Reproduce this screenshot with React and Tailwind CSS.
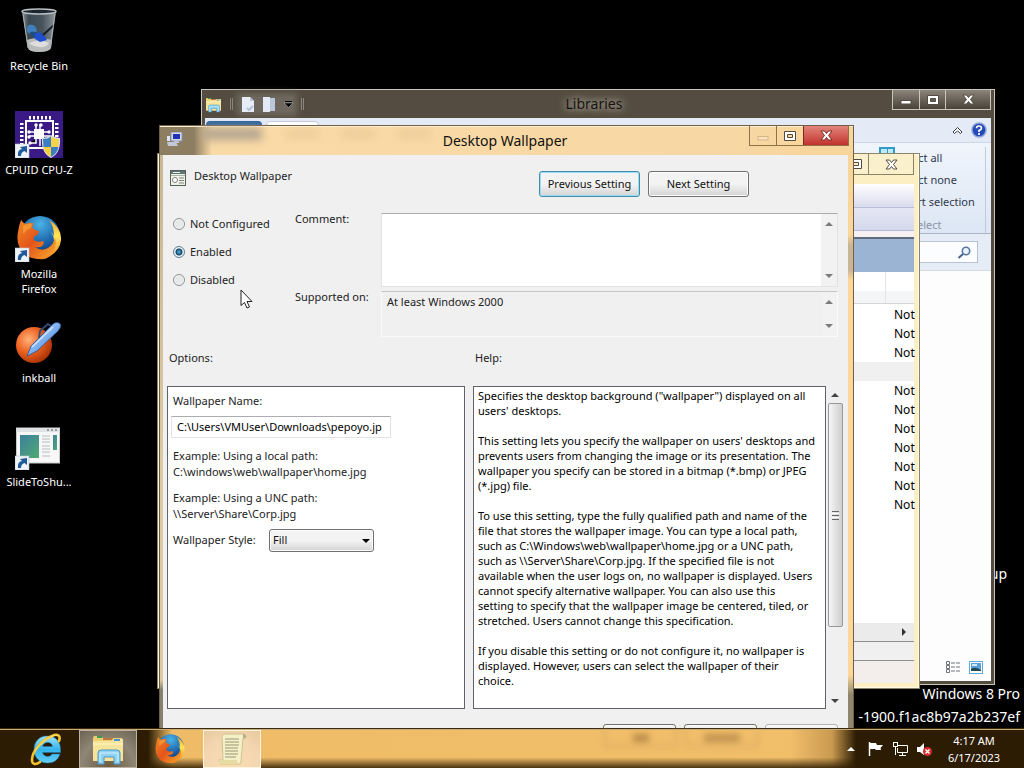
import React from 'react';

const HELP = [
  'Specifies the desktop background ("wallpaper") displayed on all',
  "users' desktops.",
  '',
  "This setting lets you specify the wallpaper on users' desktops and",
  'prevents users from changing the image or its presentation. The',
  'wallpaper you specify can be stored in a bitmap (*.bmp) or JPEG',
  '(*.jpg) file.',
  '',
  'To use this setting, type the fully qualified path and name of the',
  'file that stores the wallpaper image. You can type a local path,',
  'such as C:\\Windows\\web\\wallpaper\\home.jpg or a UNC path,',
  'such as \\\\Server\\Share\\Corp.jpg. If the specified file is not',
  'available when the user logs on, no wallpaper is displayed. Users',
  'cannot specify alternative wallpaper. You can also use this',
  'setting to specify that the wallpaper image be centered, tiled, or',
  'stretched. Users cannot change this specification.',
  '',
  'If you disable this setting or do not configure it, no wallpaper is',
  'displayed. However, users can select the wallpaper of their',
  'choice.',
].join('\n');

function Arrow({ dir = 'up', className = '' }) {
  const d = { up: 'M0 4L4 0L8 4Z', down: 'M0 0L4 4L8 0Z', right: 'M2 0L6 4L2 8Z' }[dir];
  const h = dir === 'right' ? 8 : 4;
  return (
    <svg width="8" height={h} viewBox={`0 0 8 ${h}`} className={className}>
      <path d={d} fill="currentColor" />
    </svg>
  );
}

/* ---------- icons ---------- */

function RecycleBin() {
  return (
    <svg width="48" height="48" viewBox="0 0 48 48">
      <defs>
        <linearGradient id="bin" x1="0" x2="1">
          <stop offset="0" stopColor="#8d959b" />
          <stop offset=".2" stopColor="#3c4750" />
          <stop offset=".6" stopColor="#48545d" />
          <stop offset="1" stopColor="#8f979c" />
        </linearGradient>
      </defs>
      <path d="M7 5L41 5L36 42Q34 46 24 46T13 42Z" fill="url(#bin)" />
      <path d="M11.500 34Q23 30 37 34L36 42Q34 46 24 46T13 42Z" fill="#b9bbbb" />
      <path d="M14 37Q24 32 34 37Q31 42 24 41T14 37Z" fill="#dededc" />
      <path d="M12 22Q13 17 18 19Q21 20 22 25Q19 29 16 28Q11 27 12 22Z" fill="#3f7fbb" />
      <path d="M15 26Q19 25 22 27L24 31L20 32Q16 31 15 26Z" fill="#1e4c86" />
      <path d="M20 28L25 26L30 31L32 34L25 36L20 33Z" fill="#1f4fd0" />
      <path d="M28 29L39 19" stroke="#141d26" strokeWidth="2" />
      <ellipse cx="24" cy="5.500" rx="17" ry="2.500" fill="#1c262e" stroke="#b9bfc2" strokeWidth="1.500" />
      <path d="M8 8L13 42M40 8L35 42" stroke="#aab1b5" strokeWidth="1" fill="none" />
    </svg>
  );
}

function ShortcutArrow() {
  return (
    <g>
      <rect x="0" y="34" width="14" height="14" fill="#eef3f8" stroke="#b9c7d6" strokeWidth=".6" />
      <path d="M3 46Q2 40 7 39L5 37L12 36L12 43L9.500 41Q6 42 6 46Z" fill="#1f5b9c" />
    </g>
  );
}

function CpuZ() {
  const t = [14, 18, 22, 26, 30, 34];
  return (
    <svg width="48" height="48" viewBox="0 0 48 48">
      <rect width="48" height="47" y="1" fill="#3a1b86" />
      {t.map((v) => (
        <g key={v} fill="#fff">
          <rect x={v} y="6" width="2" height="3.500" />
          <rect x="5" y={v - 1} width="3.500" height="2" />
          <rect x="40" y={v - 1} width="3.500" height="2" />
        </g>
      ))}
      <rect x="11" y="11" width="27" height="27" fill="none" stroke="#fff" strokeWidth="2" />
      <rect x="19" y="19" width="10" height="10" fill="#fff" />
      <path d="M21 19V14M25 19V14M29 22H35M29 26H35M19 22H14M19 26H14M21 29V33H14M25 29V36" stroke="#fff" strokeWidth="1.500" />
      <g fill="#fff">
        <circle cx="21" cy="15" r="1.700" /><circle cx="26" cy="15" r="1.700" /><circle cx="34" cy="22" r="1.700" />
        <circle cx="14" cy="22" r="1.700" /><circle cx="14" cy="27" r="1.700" /><circle cx="15" cy="33" r="1.700" />
      </g>
      <path d="M27 28Q32 28 36 25Q40 28 45 28Q46 43 36 48Q26 43 27 28Z" fill="#d9dde0" />
      <path d="M28 29Q33 29 36 26.500V37H28.500Z" fill="#3a7fc4" />
      <path d="M36 26.500Q40 29 44 29L43.500 37H36Z" fill="#f5d44c" />
      <path d="M28.500 37H36V47Q30 44 28.500 37Z" fill="#f5cf3e" />
      <path d="M36 37H43.500Q42 44 36 47Z" fill="#3a7fc4" />
      <ShortcutArrow />
    </svg>
  );
}

function FirefoxArt({ size, shortcut, id }) {
  return (
    <svg width={size} height={size} viewBox="0 0 48 48">
      <defs>
        <radialGradient id={id + 'a'} cx=".5" cy=".2" r=".8">
          <stop offset="0" stopColor="#4bb3e6" />
          <stop offset=".6" stopColor="#1b62a8" />
          <stop offset="1" stopColor="#11306b" />
        </radialGradient>
        <linearGradient id={id + 'b'} x1="0" y1="0" x2="1" y2=".9">
          <stop offset="0" stopColor="#f08a24" />
          <stop offset=".5" stopColor="#e4541a" />
          <stop offset="1" stopColor="#f7a52a" />
        </linearGradient>
        <linearGradient id={id + 'c'} x1="0" y1="0" x2="0" y2="1">
          <stop offset="0" stopColor="#f6a62a" />
          <stop offset=".4" stopColor="#ffe45a" />
          <stop offset="1" stopColor="#ef7d1c" />
        </linearGradient>
      </defs>
      <circle cx="25" cy="22" r="20" fill={`url(#${id}a)`} />
      <path d="M34 6Q47 14 46 26T30 45Q20 46 14 41Q30 42 36 34T36 18Q38 20 39 22Q39 12 34 6Z" fill={`url(#${id}c)`} />
      <path d="M6 6Q8 9 11 10Q14 8 18 9Q19 11 17 13Q19 16 24 17Q24 20 20 22Q18 23 19 26Q22 29 28 27Q30 29 27 32Q24 34 20 33Q26 38 33 34Q39 30 40 24Q43 36 33 42Q23 48 12 42Q0 34 3 18Q4 11 6 6Z" fill={`url(#${id}b)`} />
      <path d="M8 12Q13 9 17 10L16 14Q10 16 9 20Q7 17 8 12Z" fill="#f6a43a" opacity=".7" />
      {shortcut && <ShortcutArrow />}
    </svg>
  );
}

function Inkball() {
  return (
    <svg width="48" height="48" viewBox="0 0 48 48">
      <defs>
        <radialGradient id="ball" cx=".35" cy=".35" r=".7">
          <stop offset="0" stopColor="#ffb27a" />
          <stop offset=".5" stopColor="#ee6422" />
          <stop offset="1" stopColor="#a93206" />
        </radialGradient>
        <linearGradient id="pen" x1="0" y1="0" x2="1" y2="1">
          <stop offset="0" stopColor="#dcecff" />
          <stop offset=".5" stopColor="#7fb0ef" />
          <stop offset="1" stopColor="#2f6fd0" />
        </linearGradient>
      </defs>
      <circle cx="19" cy="27" r="18" fill="url(#ball)" />
      <path d="M12 38L16 28L36 8Q40 3 44 5T43 13L22 33Z" fill="url(#pen)" stroke="#28518f" strokeWidth=".8" />
      <path d="M24 20L25 13L33 6L36 8" fill="none" stroke="#2d4c7c" strokeWidth="1.800" />
      <path d="M17 29L38 9" stroke="#fff" strokeWidth="1.500" opacity=".6" />
    </svg>
  );
}

function SlideIcon() {
  return (
    <svg width="48" height="48" viewBox="0 0 48 48">
      <defs>
        <linearGradient id="sl" x1="0" y1="0" x2="1" y2="1">
          <stop offset="0" stopColor="#3d7f9f" />
          <stop offset="1" stopColor="#4faa72" />
        </linearGradient>
      </defs>
      <rect x="1.500" y="6" width="43" height="35" fill="#f7f7f7" stroke="#c6c9cb" />
      <rect x="1.500" y="6" width="43" height="4" fill="#dfe3e6" />
      <path d="M32 8h2M36 8h2M40 8h2" stroke="#555" />
      <rect x="5" y="13" width="19" height="23" fill="url(#sl)" />
      <path d="M27 14h8M27 17h8M27 20h8M27 24h8M27 27h8M27 30h8M27 34h8" stroke="#b7bcc0" />
      <rect x="38" y="13" width="4" height="15" fill="url(#sl)" />
      <ShortcutArrow />
    </svg>
  );
}

function FolderIcon({ size }) {
  return (
    <svg width={size} height={size} viewBox="0 0 34 34">
      <path d="M3 4H10L12 6H31L32 8V29H2V6Z" fill="#e9cf72" />
      <rect x="6" y="4" width="5" height="2" fill="#3b9a56" />
      <path d="M12 6H22V8H12Z" fill="#c3743a" />
      <path d="M2 9H20L22 7H32V29H2Z" fill="#f7e49b" />
      <path d="M23 8h6" stroke="#4894d8" strokeWidth="2" />
      <path d="M2 12H32" stroke="#fff6c9" />
      <path d="M7 32V21Q7 18 10 18H26Q29 18 29 21V32H23V25H13V32Z" fill="#8fd2f1" stroke="#4697c7" />
      <path d="M9 30V21H27V30" stroke="#d4f1fd" fill="none" />
    </svg>
  );
}

function IeIcon() {
  return (
    <svg width="34" height="34" viewBox="0 0 34 34">
      <defs>
        <linearGradient id="ie" x1="0" y1="0" x2="0" y2="1">
          <stop offset="0" stopColor="#9be4fb" />
          <stop offset=".5" stopColor="#35b4ec" />
          <stop offset="1" stopColor="#62cdf5" />
        </linearGradient>
      </defs>
      <path d="M18 4C10 4 5 10 5 17.500S10 31 18.500 31C25 31 29 28 31 22H23C22 25 15 26 13.500 20.500H31.500C32.500 10 27 4 18 4ZM13.500 14.500C14.500 9 23 9 23.500 14.500Z" fill="url(#ie)" fillRule="evenodd" stroke="#1c7db8" strokeWidth=".5" />
      <path d="M30 9C32 4 29 1 23 4C13 8 3 19 3 28C3 33 7 33 11 30" fill="none" stroke="#f4c22d" strokeWidth="2.600" strokeLinecap="round" />
      <path d="M29 4C26 1 12 9 6 19" fill="none" stroke="#ffe98a" strokeWidth=".9" />
    </svg>
  );
}

function ScrollIcon() {
  return (
    <svg width="32" height="32" viewBox="0 0 32 32">
      <path d="M6 3Q7 1 9 1H27Q30 1 30 4Q29 6 27 5L25 28Q26 31 23 31H5Q2 30 3 27H7Z" fill="#f6f0c6" stroke="#c5b98a" strokeWidth=".8" />
      <path d="M27 1Q30 1 30 4Q29 6 27 5Z" fill="#b9ad86" />
      <path d="M3 27H21Q21 31 23 31H5Q2 30 3 27Z" fill="#e6dba2" />
      <path d="M9 6H23M9 9H23M9 12H23M9 15H22M9 18H22M9 21H22M9 24H20" stroke="#8f8a70" strokeWidth=".9" />
    </svg>
  );
}

/* ---------- window controls ---------- */

function MinGlyph({ fill, stroke }) {
  return (
    <svg width="14" height="12" viewBox="0 0 14 12">
      <rect x="2" y="6.500" width="10" height="3.500" fill={fill} stroke={stroke} />
    </svg>
  );
}
function MaxGlyph({ fill, stroke }) {
  return (
    <svg width="12" height="12" viewBox="0 0 12 12">
      <path d="M.5 1.500H11.500V10.500H.5ZM3.500 4.500V7.500H8.500V4.500Z" fill={fill} stroke={stroke} fillRule="evenodd" />
    </svg>
  );
}
function CloseGlyph({ fill, stroke }) {
  return (
    <svg width="13" height="11" viewBox="0 0 13 11">
      <path d="M1 1H4.500L6.500 3.500L8.500 1H12L8.500 5.500L12 10H8.500L6.500 7.500L4.500 10H1L4.500 5.500Z" fill={fill} stroke={stroke} />
    </svg>
  );
}

const ICONS = [
  ['Recycle Bin', <RecycleBin />],
  ['CPUID CPU-Z', <CpuZ />],
  ['Mozilla Firefox', <FirefoxArt size={48} shortcut id="fd" />],
  ['inkball', <Inkball />],
  ['SlideToShu...', <SlideIcon />],
];

function DesktopIcons() {
  return (
    <ul className="flex w-[78px] flex-col">
      {ICONS.map(([name, art]) => (
        <li key={name} className="h-[104px] pt-[6px]">
          <button className="flex w-full flex-col items-center gap-1 text-[11px] leading-[15px] text-white">
            {art}
            <span className={name === 'Mozilla Firefox' ? 'w-12' : 'whitespace-nowrap'}>{name}</span>
          </button>
        </li>
      ))}
    </ul>
  );
}

function LibrariesWindow() {
  return (
    <section aria-label="Libraries" className="absolute top-[89px] left-[201px] flex h-[596px] w-[794px] flex-col border border-[#c9c5b8] bg-[#544c41] px-[3px] pb-[3px]">
      <header className="flex h-[28px] items-start">
        <div className="flex h-full items-center gap-2 text-[#8b867c]">
          <FolderIcon size={17} />
          <span className="h-3 w-[3px] border-x border-[#8b867c]" />
          <span className="flex items-center gap-2 bg-[#6d675d] shadow-[0_0_6px_4px_#6d675d]">
            <svg width="14" height="15" viewBox="0 0 14 15">
              <path d="M1 0H9L13 4V15H1Z" fill="#e6edf6" />
              <path d="M9 0V4H13Z" fill="#b8c7dc" />
              <path d="M6 11L8 13L12 9" stroke="#b4c1da" strokeWidth="2" fill="none" />
            </svg>
            <svg width="13" height="15" viewBox="0 0 13 15">
              <path d="M0 0H7V15H0Z" fill="#e3eaf5" /><path d="M7 1H12V14H7Z" fill="#b9c6dd" />
            </svg>
            <svg width="9" height="8" viewBox="0 0 9 8">
              <path d="M1 1.500H8" stroke="#000" /><path d="M0 3H9L4.500 7.500Z" fill="#000" stroke="#ddd" strokeWidth=".4" />
            </svg>
          </span>
          <span className="h-3 w-[3px] border-x border-[#8b867c]" />
        </div>
        <h2 className="flex-1 self-center pr-2 text-center text-[14px] leading-5 text-[#17140f] [text-shadow:0_0_6px_#a8a297,0_0_10px_#a8a297,0_0_12px_#8d877c]">
          Libraries
        </h2>
        <div className="flex h-[20px] border border-t-0 border-[#c9c5b8] bg-linear-to-b from-[#8a857c] to-[#4a4238]">
          <button aria-label="Minimize Libraries" className="flex w-[27px] items-center justify-center border-r border-[#c9c5b8]"><MinGlyph fill="#fff" stroke="#544c41" /></button>
          <button aria-label="Maximize Libraries" className="flex w-[26px] items-center justify-center border-r border-[#c9c5b8]"><MaxGlyph fill="#fff" stroke="#544c41" /></button>
          <button aria-label="Close Libraries" className="flex w-[44px] items-center justify-center"><CloseGlyph fill="#fff" stroke="#544c41" /></button>
        </div>
      </header>
      <div className="flex flex-1 flex-col bg-[#fdfdfd]">
        <div className="flex h-[24px] items-start justify-between bg-[#e4ebf7] pr-1">
          <div className="flex gap-1 pt-[3px] pl-px">
            <span className="h-5 w-[56px] rounded-t-sm bg-[#2f659f]" />
            <span className="h-5 w-[53px] rounded-t-sm border border-[#c5cbd6] bg-white" />
          </div>
          <div className="flex items-center gap-2 self-center">
            <button aria-label="Collapse ribbon">
              <svg width="11" height="9" viewBox="0 0 11 9"><path d="M1 6L5.500 1.500L10 6L8.500 7.500L5.500 5L2.500 7.500Z" fill="#fff" stroke="#333c4b" /></svg>
            </button>
            <button aria-label="Help">
              <svg width="16" height="16" viewBox="0 0 16 16">
                <circle cx="8" cy="8" r="7" fill="#2449b5" stroke="#8ea3d8" strokeWidth="1.500" />
                <path d="M5.500 6.200Q5.500 4 8 4T10.500 6.200Q10.500 7.400 8 8.500V10M8 11V13" stroke="#fff" strokeWidth="1.700" fill="none" />
              </svg>
            </button>
          </div>
        </div>
        <div className="flex h-[92px] justify-end border-y border-t-[#cdd7e8] border-b-[#aab5c9] bg-linear-to-b from-[#f0f5fc] to-[#dce6f4] pt-1 pr-[5px]">
          <div className="flex w-[115px] flex-col items-start border-r border-[#c0cbdf] pl-[20px] text-[11px] text-[#30394d]">
            <button className="flex h-[22px] items-center">
              <span className="-ml-3 grid h-[12px] w-[16px] grid-cols-2 gap-px self-start border-2 border-[#2f9bc6] bg-[#2f9bc6]"><i className="bg-[#bfe8f8]" /><i className="bg-[#bfe8f8]" /></span>
              <span className="pl-[2px]">Select all</span>
            </button>
            <button className="flex h-[22px] items-center pl-[6px]">Select none</button>
            <button className="flex h-[22px] items-center pl-[4px] whitespace-nowrap">Invert selection</button>
            <span className="flex h-5 items-end pl-[20px] leading-4 text-[#8a93a3]">Select</span>
          </div>
        </div>
        <div className="flex h-[37px] items-center justify-end border-b border-[#d3dce8] bg-[#e5ecf6] pr-[13px]">
          <div className="flex h-[22px] w-[180px] items-center border border-[#b6c2d2] bg-[#fbfdff] pr-[6px]">
            <input aria-label="Search Libraries" className="min-w-0 flex-1 bg-transparent outline-none" />
            <svg width="14" height="13" viewBox="0 0 14 13">
              <circle cx="9" cy="5" r="3.700" fill="#eaf3fb" stroke="#5876a3" strokeWidth="1.600" />
              <path d="M6 8L1.500 12" stroke="#46618d" strokeWidth="2" />
            </svg>
          </div>
        </div>
        <div className="flex-1" />
        <div className="flex h-[27px] items-center justify-end gap-2 pr-2">
          <button aria-label="Details view">
            <svg width="15" height="13" viewBox="0 0 15 13" fill="none" stroke="#6c747e">
              <path d="M.5.5H3.500V3.500H.5ZM.5 4.500H3.500V7.500H.5ZM.5 8.500H3.500V11.500H.5Z" /><path d="M5 2H15M5 6H15M5 10H15" strokeDasharray="4 1" />
            </svg>
          </button>
          <button aria-label="Thumbnail view">
            <svg width="14" height="13" viewBox="0 0 14 13">
              <rect x=".5" y=".5" width="13" height="12" fill="#fff" stroke="#5fa9d6" />
              <rect x="2" y="2" width="10" height="8" fill="#5c9fd8" /><path d="M2 8Q6 5 12 9V10H2Z" fill="#1f4a52" /><path d="M3 3H8V5H3Z" fill="#d3eafa" />
            </svg>
          </button>
        </div>
      </div>
    </section>
  );
}

const ROWS = ['Not', 'Not', 'Not', '', 'Not', 'Not', 'Not', 'Not', 'Not', 'Not', 'Not'];

function PolicyEditorWindow() {
  return (
    <section aria-label="Policy editor" className="absolute top-[153px] left-[157px] flex h-[536px] w-[763px] flex-col border border-[#8c8467] bg-[#fbefc3] px-[5px] pb-[5px] shadow-[inset_0_0_0_1px_#fffbe6]">
      <header className="flex h-[30px] items-start justify-end">
        <div className="flex h-[21px] border border-t-0 border-[#8c8467] bg-[#fbf0cc]">
          <button aria-label="Maximize" className="flex w-[26px] items-center justify-center border-r border-[#8c8467]"><MaxGlyph fill="#fff" stroke="#544c41" /></button>
          <button aria-label="Close" className="flex w-[44px] items-center justify-center"><CloseGlyph fill="#fff" stroke="#544c41" /></button>
        </div>
      </header>
      <div className="flex flex-1 flex-col bg-white">
        <div className="h-[24px] border-b border-[#b9bcd6] bg-linear-to-b from-white to-[#d9dbee]" />
        <div className="h-[23px] border-b border-[#b9bcd6] bg-linear-to-b from-[#e6e7f5] to-[#d5d8ec]" />
        <div className="h-[6px] bg-[#f7f0f2]" />
        <div className="h-[35px] border-t-2 border-[#5f6b7c] bg-[#9bb4d3]" />
        <div className="flex h-[32px] justify-end border-b border-[#d5d5d5] bg-linear-to-b from-white from-60% to-[#f4f5f7] to-60%">
          <span className="mr-[28px] w-px bg-[#e2e5ea]" />
        </div>
        <ul className="flex flex-col pt-px text-[12px]">
          {ROWS.map((r, i) => (
            <li key={i} className={'flex h-[19px] items-center justify-end ' + (r ? '' : 'bg-[#f0f0f0]')}>
              <span className="w-[20px]">{r}</span>
            </li>
          ))}
        </ul>
        <div className="flex-1" />
        <div className="flex h-[19px] items-center justify-end border-b border-[#8e8e8e] bg-[#ebebeb] pr-[6px] text-[#333]"><Arrow dir="right" /></div>
        <div className="h-[19px] border-b border-[#8e8e8e] bg-[#f0f0f0]" />
        <div className="h-[22px] bg-[#f3eeec]" />
      </div>
    </section>
  );
}

const PUSH = 'rounded-[3px] border bg-linear-to-b from-[#f3f3f3] from-50% to-[#d4d4d4] pb-[2px] text-[11px] text-[#111] shadow-[inset_0_0_0_1px_#fcfcfc]';

function ScrollColumn() {
  return (
    <div className="flex w-[16px] flex-col items-center justify-between bg-[#f2f2f2] py-[8px] text-[#7b7b7b]">
      <Arrow dir="up" />
      <Arrow dir="down" />
    </div>
  );
}

function Radio({ label, checked }) {
  return (
    <label className="flex h-7 items-center gap-[5px]">
      <input
        type="radio"
        name="state"
        defaultChecked={checked}
        className="size-3 appearance-none rounded-full border border-[#8e8f8f] bg-[#e6e8ea] shadow-[inset_0_0_0_1px_#f6f6f6] checked:border-[#5d7f96] checked:bg-[radial-gradient(circle,#3f9cc9_0_1px,#17405e_3px,#d8eaf4_4px)]"
      />
      <span className="pb-[2px]">{label}</span>
    </label>
  );
}

function WallpaperDialog() {
  return (
    <section aria-label="Desktop Wallpaper" className="absolute top-[125px] left-[159px] flex h-[640px] w-[695px] flex-col border border-[#6f5f45] bg-[#f8d7a0]">
      <header className="relative flex h-[29px] items-start bg-[linear-gradient(to_right,#8d7e62_34px,#fadaa6_52px,#f7d8a4_80%,#f8d59a)] shadow-[inset_0_1px_0_#fff1d6]">
        <div className="absolute top-[2px] left-[42px] flex h-3 items-center blur-[4px]" aria-hidden="true">
          <span className="h-3 w-[60px] bg-[#b5a58f]" />
          <span className="ml-6 h-1 w-8 bg-[#dfc093]" />
          <span className="ml-6 h-1 w-8 bg-[#dfc093]" />
          <span className="ml-6 h-1 w-8 bg-[#dfc093]" />
        </div>
        <svg width="17" height="15" viewBox="0 0 17 15" className="mt-[6px] ml-[6px]">
          <rect x="5" y="0" width="11" height="9" fill="#d5dbe8" stroke="#8892ac" /><rect x="7" y="2" width="7" height="5" fill="#2230b8" />
          <path d="M1 4H4V9H1Z" fill="#dfe5f0" /><path d="M1 10H10L12 14H2Z" fill="#c3c9d6" /><path d="M8 10H13" stroke="#bcc4d4" strokeWidth="2" />
        </svg>
        <h1 className="relative flex-1 self-center pl-[78px] text-center text-[14px] leading-5 text-[#111]">Desktop Wallpaper</h1>
        <div className="mr-[4px] flex h-[20px] border border-t-0 border-[#8f7148]">
          <button aria-label="Minimize" disabled className="flex w-[27px] items-center justify-center border-r border-[#8f7148]"><MinGlyph fill="#fbe3bc" stroke="#d3b588" /></button>
          <button aria-label="Maximize dialog" className="flex w-[26px] items-center justify-center"><MaxGlyph fill="#fff" stroke="#544c41" /></button>
          <button aria-label="Close dialog" className="flex w-[45px] items-center justify-center border-l border-[#7c2a22] bg-linear-to-b from-[#e2837a] to-[#c22f2c]"><CloseGlyph fill="#fff" stroke="#7c2a22" /></button>
        </div>
      </header>
      <div className="flex flex-1">
        <div className="w-[3px] bg-[linear-gradient(to_bottom,#c9b894,#dcc8a2_300px,#dcc8a2_525px,#87806f_535px)]" />
        <div className="flex min-w-0 flex-1 flex-col bg-[#f0f0f0] text-[11px] leading-[15px] text-[#222]">
          <div className="flex h-[58px] items-start pr-[99px] pl-[7px]">
            <svg width="16" height="16" viewBox="0 0 16 16" className="mt-[15px]">
              <rect x=".5" y=".5" width="15" height="15" fill="#f2f1e8" stroke="#56605c" /><path d="M1 1H15V4H1Z" fill="#5d7672" />
              <path d="M3 2.500H10" stroke="#e8eeee" /><path d="M1 5.500H15" stroke="#a8b0a8" /><circle cx="5" cy="10" r="2.500" fill="#fff" stroke="#7a8580" /><path d="M9 8H14M9 10.500H14M9 13H14" stroke="#7a8580" />
            </svg>
            <span className="mt-[13px] ml-2 flex-1">Desktop Wallpaper</span>
            <div className="mt-4 flex gap-2">
              <button className={PUSH + ' h-[26px] w-[101px] border-[#3c8fae] ring-1 ring-[#9bdcf0] ring-inset'}>Previous Setting</button>
              <button className={PUSH + ' h-[26px] w-[101px] border-[#707070]'}>Next Setting</button>
            </div>
          </div>
          <div className="flex pr-[10px]">
            <fieldset className="-mt-[3px] flex w-[132px] flex-col pl-[10px]">
              <Radio label="Not Configured" />
              <Radio label="Enabled" checked />
              <Radio label="Disabled" />
            </fieldset>
            <div className="flex flex-1 flex-col gap-1">
              <div className="flex">
                <label htmlFor="comment" className="-mt-[2px] w-[86px]">Comment:</label>
                <div className="flex h-[74px] flex-1 border border-[#e3e3e3] border-t-[#abadb3] bg-white">
                  <textarea id="comment" className="min-w-0 flex-1 resize-none overflow-hidden p-1 outline-none" />
                  <ScrollColumn />
                </div>
              </div>
              <div className="flex">
                <label htmlFor="supported" className="-mt-[2px] w-[86px]">Supported on:</label>
                <div className="flex h-[46px] flex-1 border border-[#fafafa] border-t-[#c4c6ca]">
                  <textarea id="supported" readOnly defaultValue="At least Windows 2000" className="min-w-0 flex-1 resize-none overflow-hidden px-[5px] pt-[2px] outline-none" />
                  <ScrollColumn />
                </div>
              </div>
            </div>
          </div>
          <div className="flex h-[49px] pt-[13px] pl-[6px]">
            <span className="w-[306px]">Options:</span>
            <span>Help:</span>
          </div>
          <div className="flex h-[323px] gap-2 px-1">
            <div className="flex w-[298px] flex-col items-start border border-[#60636a] bg-white px-[5px] pt-[6px] leading-4">
              <label htmlFor="name">Wallpaper Name:</label>
              <input id="name" defaultValue={'C:\\Users\\VMUser\\Downloads\\pepoyo.jpg'} className="mt-[7px] -ml-[2px] h-[22px] w-[220px] border border-[#e2e3ea] border-t-[#abadb3] pr-[8px] pb-[2px] pl-[5px] text-[11px] text-black outline-none" />
              <p className="mt-[10px]">Example: Using a local path:<br />C:\windows\web\wallpaper\home.jpg</p>
              <p className="mt-[10px]">Example: Using a UNC path:<br />\\Server\Share\Corp.jpg</p>
              <div className="mt-[7px] flex items-center">
                <label htmlFor="style" className="w-[96px] pb-[2px]">Wallpaper Style:</label>
                <div className="relative">
                  <select id="style" className={PUSH + ' block h-[23px] w-[105px] appearance-none border-[#707070] pl-[3px]'}>
                    <option>Fill</option>
                  </select>
                  <Arrow dir="down" className="pointer-events-none absolute top-[10px] right-[4px] text-black" />
                </div>
              </div>
            </div>
            <div className="flex flex-1">
              <div className="flex-1 border border-[#60636a] bg-white pt-px pl-1">
                <p className="whitespace-pre text-[11px] text-black">{HELP}</p>
              </div>
              <div className="flex w-[18px] flex-col items-center pt-[7px] pb-[6px] text-[#444]">
                <Arrow dir="up" />
                <div className="mt-[6px] flex h-[224px] w-[15px] flex-col items-center justify-center gap-px rounded-[2px] border border-[#979797] bg-linear-to-r from-[#f5f5f5] to-[#cfcfcf]">
                  <span className="h-px w-[7px] bg-[#666]" /><span className="h-px w-[7px] bg-white" /><span className="h-px w-[7px] bg-[#666]" /><span className="h-px w-[7px] bg-white" /><span className="h-px w-[7px] bg-[#666]" />
                </div>
                <span className="flex-1" />
                <Arrow dir="down" />
              </div>
            </div>
          </div>
          <div className="mt-[15px] flex justify-end gap-2 pr-[10px]">
            <button aria-label="OK" className={PUSH + ' h-[24px] w-[73px] border-[#707070]'} />
            <button aria-label="Cancel" className={PUSH + ' h-[24px] w-[73px] border-[#707070]'} />
            <button aria-label="Apply" disabled className={PUSH + ' h-[24px] w-[73px] border-[#adb2b5]'} />
          </div>
        </div>
        <div className="w-[5px] bg-[linear-gradient(to_bottom,#f8d59a,#f8d59a_80px,#c9b596_90px,#c9b596_115px,#fbd899_125px,#fbd899_520px,#8f866f_540px)]" />
      </div>
    </section>
  );
}

function Taskbar() {
  return (
    <footer className="z-10 flex h-[39px] items-stretch border-t border-[#c8ab76] bg-[linear-gradient(to_bottom,transparent_72%,rgba(45,28,2,0.85)),linear-gradient(to_right,#2c1c03_148px,#efbb66_172px,#f1be6a_790px,#c99a50_832px,#2c1c03_856px)] shadow-[0_-1px_0_#3a2a10]">
      <nav className="flex flex-1 items-stretch gap-[4px] pl-[17px]">
        <button aria-label="Internet Explorer" className="flex w-[58px] items-center justify-center"><IeIcon /></button>
        <button aria-label="File Explorer" className="flex w-[58px] items-center justify-center border border-[#b9b2a5] bg-[radial-gradient(circle_at_50%_100%,#6d5c3e,#8f8676_60%,#6b6152)]"><FolderIcon size={34} /></button>
        <button aria-label="Firefox" className="flex w-[58px] items-center justify-center"><FirefoxArt size={32} id="ft" /></button>
        <button aria-label="Group policy editor" className="flex w-[58px] items-center justify-center border border-[#fff4e0] bg-[radial-gradient(circle_at_50%_100%,#fbdcae,#f3d7b2_60%,#e9c99c)]"><ScrollIcon /></button>
        <div className="flex flex-1 items-start justify-end gap-2 pr-[8px] blur-[3px]" aria-hidden="true">
          <span className="flex h-[17px] w-[73px] items-center justify-center border-2 border-t-0 border-[#d9ab63]"><i className="h-2 w-4 bg-[#b98c49]" /></span>
          <span className="flex h-[17px] w-[73px] items-center justify-center border-2 border-t-0 border-[#d9ab63]"><i className="h-2 w-9 bg-[#c09350]" /></span>
          <span className="w-[73px]" />
        </div>
      </nav>
      <div className="flex items-center gap-[9px] text-white">
        <button aria-label="Show hidden icons"><Arrow dir="up" /></button>
        <button aria-label="Action center" className="ml-1">
          <svg width="16" height="14" viewBox="0 0 16 14"><path d="M1.500 0V14" stroke="#fff" strokeWidth="1.500" /><path d="M2 1H8L9 3H15L12.500 6L13 8H8L7 7H2Z" fill="#fff" /></svg>
        </button>
        <button aria-label="Network">
          <svg width="15" height="14" viewBox="0 0 15 14" fill="none" stroke="#fff"><path d="M5 3.500H14.500V10.500H4.500V6M9.500 10.500V13M6 13.500H13" /><rect x=".5" y=".5" width="4" height="4" /><path d="M2.500 5V13" /></svg>
        </button>
        <button aria-label="Volume muted">
          <svg width="16" height="15" viewBox="0 0 16 15"><path d="M0 5H3L7 1V13L3 10H0Z" fill="#fff" /><circle cx="10.500" cy="9.500" r="4.500" fill="#d32a2a" /><path d="M8.500 7.500L12.500 11.500M12.500 7.500L8.500 11.500" stroke="#fff" strokeWidth="1.500" /></svg>
        </button>
        <time className="mr-[18px] w-[64px] text-center text-[11px] leading-[17px] whitespace-nowrap">4:17 AM<br />6/17/2023</time>
      </div>
    </footer>
  );
}

export default function App() {
  return (
    <main className="flex h-screen flex-col overflow-hidden bg-black font-['Noto_Sans',sans-serif]">
      <div className="relative min-h-0 flex-1 overflow-hidden">
        <DesktopIcons />
        <p className="absolute right-[17px] bottom-[144px] text-[14px] leading-[23px] text-white">up</p>
        <p className="absolute right-[4px] bottom-[1px] text-right text-[14px] leading-[23px] text-white">Windows 8 Pro<br />-1900.f1ac8b97a2b237ef</p>
        <LibrariesWindow />
        <PolicyEditorWindow />
        <WallpaperDialog />
        <svg width="14" height="21" viewBox="0 0 14 21" className="absolute top-[289px] left-[240px]">
          <path d="M1 1V16.500L4.500 13.500L7 19L9.500 18L7 12.500H12Z" fill="#fff" stroke="#222" />
        </svg>
      </div>
      <Taskbar />
    </main>
  );
}
